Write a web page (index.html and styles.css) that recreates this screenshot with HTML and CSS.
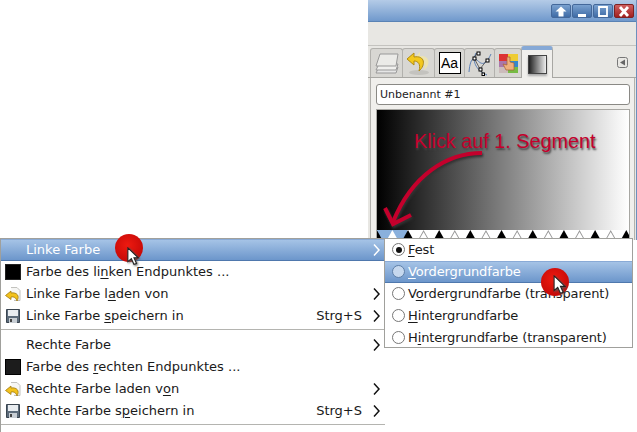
FILE: index.html
```html
<!DOCTYPE html>
<html lang="de">
<head>
  <meta charset="UTF-8" />
  <title>Farbverlauf</title>
  <link rel="stylesheet" href="styles.css">
</head>
<body>
  <div class="window">
    <div class="titlebar">
      <span class="wm-btn"><svg width="14" height="11" viewBox="0 0 14 11"><path d="M7 0.500 L12.500 5.500 H9.500 V10.500 H4.500 V5.500 H1.500 Z" fill="#fff"/></svg></span>
      <span class="wm-btn"><svg width="14" height="11" viewBox="0 0 14 11"><rect x="3" y="8" width="8" height="3" fill="#fff"/></svg></span>
      <span class="wm-btn"><svg width="14" height="11" viewBox="0 0 14 11"><path d="M3 1 H11 V10 H3 Z" fill="none" stroke="#fff" stroke-width="1.800"/></svg></span>
      <span class="wm-btn close"><svg width="14" height="11" viewBox="0 0 14 11"><path d="M3 1 L11 10 M11 1 L3 10" stroke="#fff" stroke-width="2.800"/></svg></span>
    </div>
    <div class="toolbar"></div>
    <div class="tabs">
      <div class="tab">
        <svg width="24" height="21" viewBox="0 0 24 21"><path d="M4 14 L1 20 H21 L23 14 Z" fill="#e6e6e6" stroke="#999"/><path d="M4 11 L1 17 H21 L23 11 Z" fill="#f0f0ee" stroke="#999"/><path d="M5 1 L1 13 H21 L23 1 Z" fill="#ebebe8" stroke="#999"/></svg>
      </div>
      <div class="tab">
        <svg width="25" height="24" viewBox="0 0 25 24"><ellipse cx="13" cy="21.500" rx="10" ry="2.500" fill="#c4c3bf"/><path d="M14 1 L8 7 L14 12 V9 C18 9 20 13 18 19 C25 14 24 4 14 5 Z" fill="#ece3b0"/><path d="M8 2 L1 8 L8 14 V10 C12 10 15 13 13 20 C20 14 19 4 8 6 Z" fill="#f3c81c" stroke="#b08c12"/></svg>
      </div>
      <div class="tab">
        <span class="font-tab">Aa</span>
      </div>
      <div class="tab">
        <svg width="24" height="25" viewBox="0 0 24 25"><path d="M1 21 C2 9 5 5 9 9 S17 16 23 3" fill="none" stroke="#5b7fb5"/><path d="M8 2 C3 12 10 20 19 24" fill="none" stroke="#5b7fb5"/><path d="M6 7 L9 2 M6 7 L12 18 L19 9 M12 18 L15 23" stroke="#333" stroke-width=".7" fill="none"/><rect x="5" y="6" width="3" height="3" fill="#fff" stroke="#000"/><rect x="9" y="1" width="3" height="3" fill="#fff" stroke="#000"/><rect x="18" y="8" width="3" height="3" fill="#fff" stroke="#000"/><rect x="11" y="17" width="3" height="3" fill="#fff" stroke="#000"/><rect x="14" y="22" width="2.500" height="2.500" fill="#fff" stroke="#000"/></svg>
      </div>
      <div class="tab">
        <svg width="19" height="19" viewBox="0 0 19 19"><rect x="0" y="0" width="9" height="7" fill="#d33"/><rect x="9" y="0" width="10" height="7" fill="#ec3"/><rect x="0" y="7" width="9" height="6" fill="#a7a"/><rect x="9" y="7" width="10" height="6" fill="#38c"/><rect x="0" y="13" width="9" height="6" fill="#cbb"/><rect x="9" y="13" width="10" height="6" fill="#7b4"/><path d="M8 3 H11 V8 L15 9 V16 H7 L4 10 L8 11 Z" fill="#eeb07c" stroke="#a76030" stroke-width=".7"/></svg>
      </div>
      <div class="tab active">
        <span class="gradient-tab"></span>
      </div>
      <svg class="tab-menu" width="11" height="11" viewBox="0 0 11 11"><rect x=".5" y=".5" width="10" height="10" rx="2" fill="#e8e7e3" stroke="#777"/><path d="M3 5.500 L8 2.500 V8.500 Z" fill="#666"/></svg>
    </div>
    <div class="panel">
      <div class="name-field">Unbenannt #1</div>
      <div class="gradient">
        <div class="preview">
          <span class="note">Klick auf 1. Segment</span>
          <svg class="arrow" width="110" height="120" viewBox="0 0 110 120"><path d="M105 43 C70 43 35 65 16 112" fill="none" stroke="#c4002c" stroke-width="4"/><path d="M8 98 L16 114 L34 105" fill="none" stroke="#c4002c" stroke-width="4"/></svg>
        </div>
        <div class="stops" id="stops"></div>
      </div>
    </div>
  </div>

  <div class="menu">
    <div class="item hot"><span class="ic"></span><span class="lbl">Linke Farbe</span><svg class="chev" width="7" height="12" viewBox="0 0 7 12"><path d="M1 0.500 L6 6 L1 11.500" fill="none"/></svg></div>
    <div class="item"><span class="ic"><span class="swatch"></span></span><span class="lbl">Farbe des li<u>n</u>ken Endpunktes ...</span></div>
    <div class="item"><span class="ic"><svg width="16" height="16" viewBox="0 0 16 16"><use href="#undo-icon"/></svg></span><span class="lbl">Linke Farbe l<u>a</u>den von</span><svg class="chev" width="7" height="12" viewBox="0 0 7 12"><path d="M1 0.500 L6 6 L1 11.500" fill="none"/></svg></div>
    <div class="item"><span class="ic"><svg width="16" height="16" viewBox="0 0 16 16"><use href="#save-icon"/></svg></span><span class="lbl">Linke Farbe <u>s</u>peichern in</span><span class="key">Strg+S</span><svg class="chev" width="7" height="12" viewBox="0 0 7 12"><path d="M1 0.500 L6 6 L1 11.500" fill="none"/></svg></div>
    <div class="sep"></div>
    <div class="item"><span class="ic"></span><span class="lbl">Rechte Farbe</span><svg class="chev" width="7" height="12" viewBox="0 0 7 12"><path d="M1 0.500 L6 6 L1 11.500" fill="none"/></svg></div>
    <div class="item"><span class="ic"><span class="swatch right"></span></span><span class="lbl">Farbe des <u>r</u>echten Endpunktes ...</span></div>
    <div class="item"><span class="ic"><svg width="16" height="16" viewBox="0 0 16 16"><use href="#undo-icon"/></svg></span><span class="lbl">Rechte Farbe laden v<u>o</u>n</span><svg class="chev" width="7" height="12" viewBox="0 0 7 12"><path d="M1 0.500 L6 6 L1 11.500" fill="none"/></svg></div>
    <div class="item"><span class="ic"><svg width="16" height="16" viewBox="0 0 16 16"><use href="#save-icon"/></svg></span><span class="lbl">Rechte Farbe s<u>p</u>eichern in</span><span class="key">Strg+S</span><svg class="chev" width="7" height="12" viewBox="0 0 7 12"><path d="M1 0.500 L6 6 L1 11.500" fill="none"/></svg></div>
    <div class="sep"></div>
  </div>

  <div class="submenu">
    <div class="item"><span class="radio on"></span><span class="lbl"><u>F</u>est</span></div>
    <div class="item hot"><span class="radio"></span><span class="lbl"><u>V</u>ordergrundfarbe</span></div>
    <div class="item"><span class="radio"></span><span class="lbl">V<u>o</u>rdergrundfarbe (transparent)</span></div>
    <div class="item"><span class="radio"></span><span class="lbl"><u>H</u>intergrundfarbe</span></div>
    <div class="item"><span class="radio"></span><span class="lbl">H<u>i</u>ntergrundfarbe (transparent)</span></div>
  </div>

  <div class="pointer first"><span class="dot"></span><svg class="cursor" width="13" height="19" viewBox="0 0 15 22"><use href="#cursor-icon"/></svg></div>
  <div class="pointer second"><span class="dot"></span><svg class="cursor" width="14" height="20" viewBox="0 0 15 22"><use href="#cursor-icon"/></svg></div>

  <svg class="defs" width="0" height="0">
    <symbol id="undo-icon" viewBox="0 0 16 16">
      <path d="M6 1.500 H12 L15 4.500 V14.500 H9" fill="#f6f6f4" stroke="#c2c2be"/>
      <path d="M6 5 L0.500 9.500 L6 13.500 V11 C9 10.500 11 11.500 12 15 C15 10 12 6 6 7 Z" fill="#f3c21c" stroke="#a07a10" stroke-width=".8"/>
    </symbol>
    <symbol id="save-icon" viewBox="0 0 16 16">
      <path d="M1.500 1.500 H14.500 V14.500 H1.500 Z" fill="#5c6b7a" stroke="#3a4550"/>
      <rect x="3" y="2" width="10" height="6" fill="#e8ecf0"/>
      <rect x="4" y="10" width="8" height="5" fill="#c8ced4"/>
      <rect x="5" y="11" width="2" height="3" fill="#444"/>
    </symbol>
    <symbol id="cursor-icon" viewBox="0 0 15 22">
      <path d="M1 1 V17 L5 13.500 L8 20 L11 19 L8 12.500 H13 Z" fill="#fff" stroke="#222" stroke-width="1.200"/>
    </symbol>
  </svg>

  <script>
    // marker strip under the gradient, one triangle every 15.6px
    const stops = document.getElementById('stops');
    for (let i = 0; i < 17; i++) {
      const s = document.createElement('span');
      s.className = 'stop';
      if (i % 2) s.classList.add('open');
      if (i === 1) s.classList.add('picked');
      stops.appendChild(s);
    }
  </script>
</body>
</html>
```

FILE: styles.css
```css
* {
  box-sizing: border-box;
}
html, body {
  margin: 0;
  padding: 0;
}
body {
  width: 637px;
  height: 432px;
  background: #fff;
  color: #1a1a1a;
  font-family: "DejaVu Sans", sans-serif;
  font-size: 13px;
  position: relative;
  overflow: hidden;
}
u {
  text-underline-offset: 2px;
}
.defs {
  position: absolute;
}

/* dock window */
.window {
  position: absolute;
  left: 368px;
  top: 0;
  width: 269px;
  height: 240px;
  background: #e8e7e3;
  border-right: 1px solid #6d90bd;
}
.titlebar {
  height: 22px;
  background: linear-gradient(#b4cbe7, #7099cc);
  border-bottom: 1px solid #5a83b5;
  display: flex;
  justify-content: flex-end;
  align-items: flex-end;
  gap: 1px;
  padding: 0 2px 3px 0;
}
.wm-btn {
  width: 20px;
  height: 14px;
  border: 1px solid #44689a;
  border-radius: 2px;
  background: linear-gradient(#7aa1d0, #3f6ba6);
  display: flex;
  align-items: center;
  justify-content: center;
}
.wm-btn.close {
  background: linear-gradient(#d06060, #a02020);
  border-color: #7d2222;
}
.toolbar {
  height: 24px;
  border-bottom: 1px solid #c4c3bf;
}
.tabs {
  height: 32px;
  display: flex;
  align-items: flex-end;
  padding-left: 2px;
  position: relative;
  border-bottom: 1px solid #a8a7a3;
}
.tab {
  width: 33px;
  height: 29px;
  border: 1px solid #b2b1ad;
  border-bottom: 0;
  border-radius: 3px 3px 0 0;
  background: #d8d7d3;
  margin-right: -1px;
  display: flex;
  align-items: center;
  justify-content: center;
}
.tab:nth-child(3) { width: 31px; }
.tab:nth-child(4) { width: 31px; }
.tab:nth-child(5) { width: 28px; }
.tab.active {
  width: 32px;
  height: 32px;
  margin-bottom: -1px;
  background: #f0efec;
  border-color: #a8a7a3;
  border-top: 4px solid #86a9d6;
}
.font-tab {
  width: 22px;
  height: 22px;
  background: #fff;
  border: 1px solid #000;
  color: #000;
  font: 14px "Liberation Sans", sans-serif;
  display: flex;
  align-items: center;
  justify-content: center;
}
.gradient-tab {
  width: 19px;
  height: 19px;
  border: 1px solid #444;
  background: linear-gradient(90deg, #222, #eee);
  box-shadow: 0 2px 2px #aaa;
}
.tab-menu {
  position: absolute;
  right: 8px;
  top: 11px;
}
.panel {
  height: 162px;
  margin: 0 1px 0 2px;
  background: #f0efec;
  border-left: 1px solid #b2b1ad;
  border-right: 1px solid #b2b1ad;
  padding: 6px 4px 0 5px;
}
.name-field {
  height: 21px;
  background: #fff;
  border: 1px solid #8a8985;
  border-radius: 3px;
  padding-left: 3px;
  line-height: 19px;
  font-size: 11px;
  color: #222;
}
.gradient {
  margin-top: 4px;
  border: 1px solid #a8a7a3;
}
.preview {
  height: 120px;
  background: linear-gradient(90deg, #000, #fff);
  position: relative;
}
.note {
  position: absolute;
  left: 37px;
  top: 20px;
  color: #c4002c;
  font: 19.800px "Liberation Sans", sans-serif;
  text-shadow: 1px 2px 2px #444;
  white-space: nowrap;
}
.arrow {
  position: absolute;
  left: 0;
  top: 0;
  filter: drop-shadow(1px 2px 1px #333);
}
.stops {
  height: 9px;
  background: linear-gradient(90deg, #8ab0dc 30px, #fff 30px);
  display: flex;
  overflow: hidden;
}
.stop {
  flex: 0 0 15.600px;
  height: 9px;
  background: #000;
  clip-path: polygon(50% 0, 82% 100%, 18% 100%);
}
.stop:first-child {
  margin-left: -8px;
}
.stop.open {
  background: #999;
  clip-path: polygon(50% 0, 82% 100%, 18% 100%, 50% 0, 50% 22%, 28% 88%, 72% 88%, 50% 22%);
}
.stop.picked {
  background: #fff;
  clip-path: polygon(50% 0, 82% 100%, 18% 100%);
}

/* context menus */
.menu, .submenu {
  position: absolute;
  background: #fff;
  border: 1px solid #a0a09c;
}
.menu {
  left: 0;
  top: 238px;
  width: 385px;
  height: 194px;
  border-right: 0;
  border-bottom: 0;
}
.submenu {
  left: 384px;
  top: 238px;
  width: 249px;
  height: 110px;
  letter-spacing: -0.130px;
}
.item {
  height: 22px;
  display: flex;
  align-items: center;
  padding-bottom: 1px;
  white-space: nowrap;
}
.item.hot {
  color: #fff;
  background: linear-gradient(#a5c3e6, #6c96cb);
  border-bottom: 1px solid #4f78ad;
  border-top: 1px solid #89aad6;
}
.menu .item {
  padding-left: 4px;
  padding-right: 5px;
}
.ic {
  width: 16px;
  height: 16px;
  margin-right: 5px;
  display: flex;
  flex: none;
}
.swatch {
  width: 16px;
  height: 16px;
  background: #000;
  border: 1px solid #222;
}
.swatch.right {
  background: #1c1c1c;
  border-color: #000;
}
.lbl {
  flex: 1;
}
.key {
  margin-right: 11px;
}
.chev {
  flex: none;
  stroke: #111;
  stroke-width: 1.500;
}
.hot .chev {
  stroke: #fff;
}
.sep {
  height: 1px;
  background: #b4b4b0;
  margin: 2px 0 4px;
}
.menu .sep:last-child {
  margin-top: 2px;
}
.submenu .item {
  padding-left: 7px;
}
.radio {
  width: 13px;
  height: 13px;
  border: 1px solid #777;
  border-radius: 50%;
  background: #fff;
  margin-right: 3px;
  flex: none;
  position: relative;
}
.hot .radio {
  background: #c6d8ee;
  border-color: #5e7fa8;
}
.radio.on::after {
  content: "";
  position: absolute;
  left: 2.500px;
  top: 2.500px;
  width: 6px;
  height: 6px;
  border-radius: 50%;
  background: #111;
}

/* screenshot pointer marks */
.pointer {
  position: absolute;
  width: 28px;
  height: 28px;
}
.pointer.first {
  left: 115px;
  top: 234px;
}
.pointer.second {
  left: 541px;
  top: 268px;
}
.dot {
  display: block;
  width: 28px;
  height: 28px;
  border-radius: 50%;
  background: radial-gradient(circle at 45% 40%, #ee1a10, #c80a08 70%, #900);
}
.cursor {
  position: absolute;
  left: 12px;
  top: 13px;
  filter: drop-shadow(1px 1px 1px #555);
}
.second .cursor {
  top: 7px;
}
```
